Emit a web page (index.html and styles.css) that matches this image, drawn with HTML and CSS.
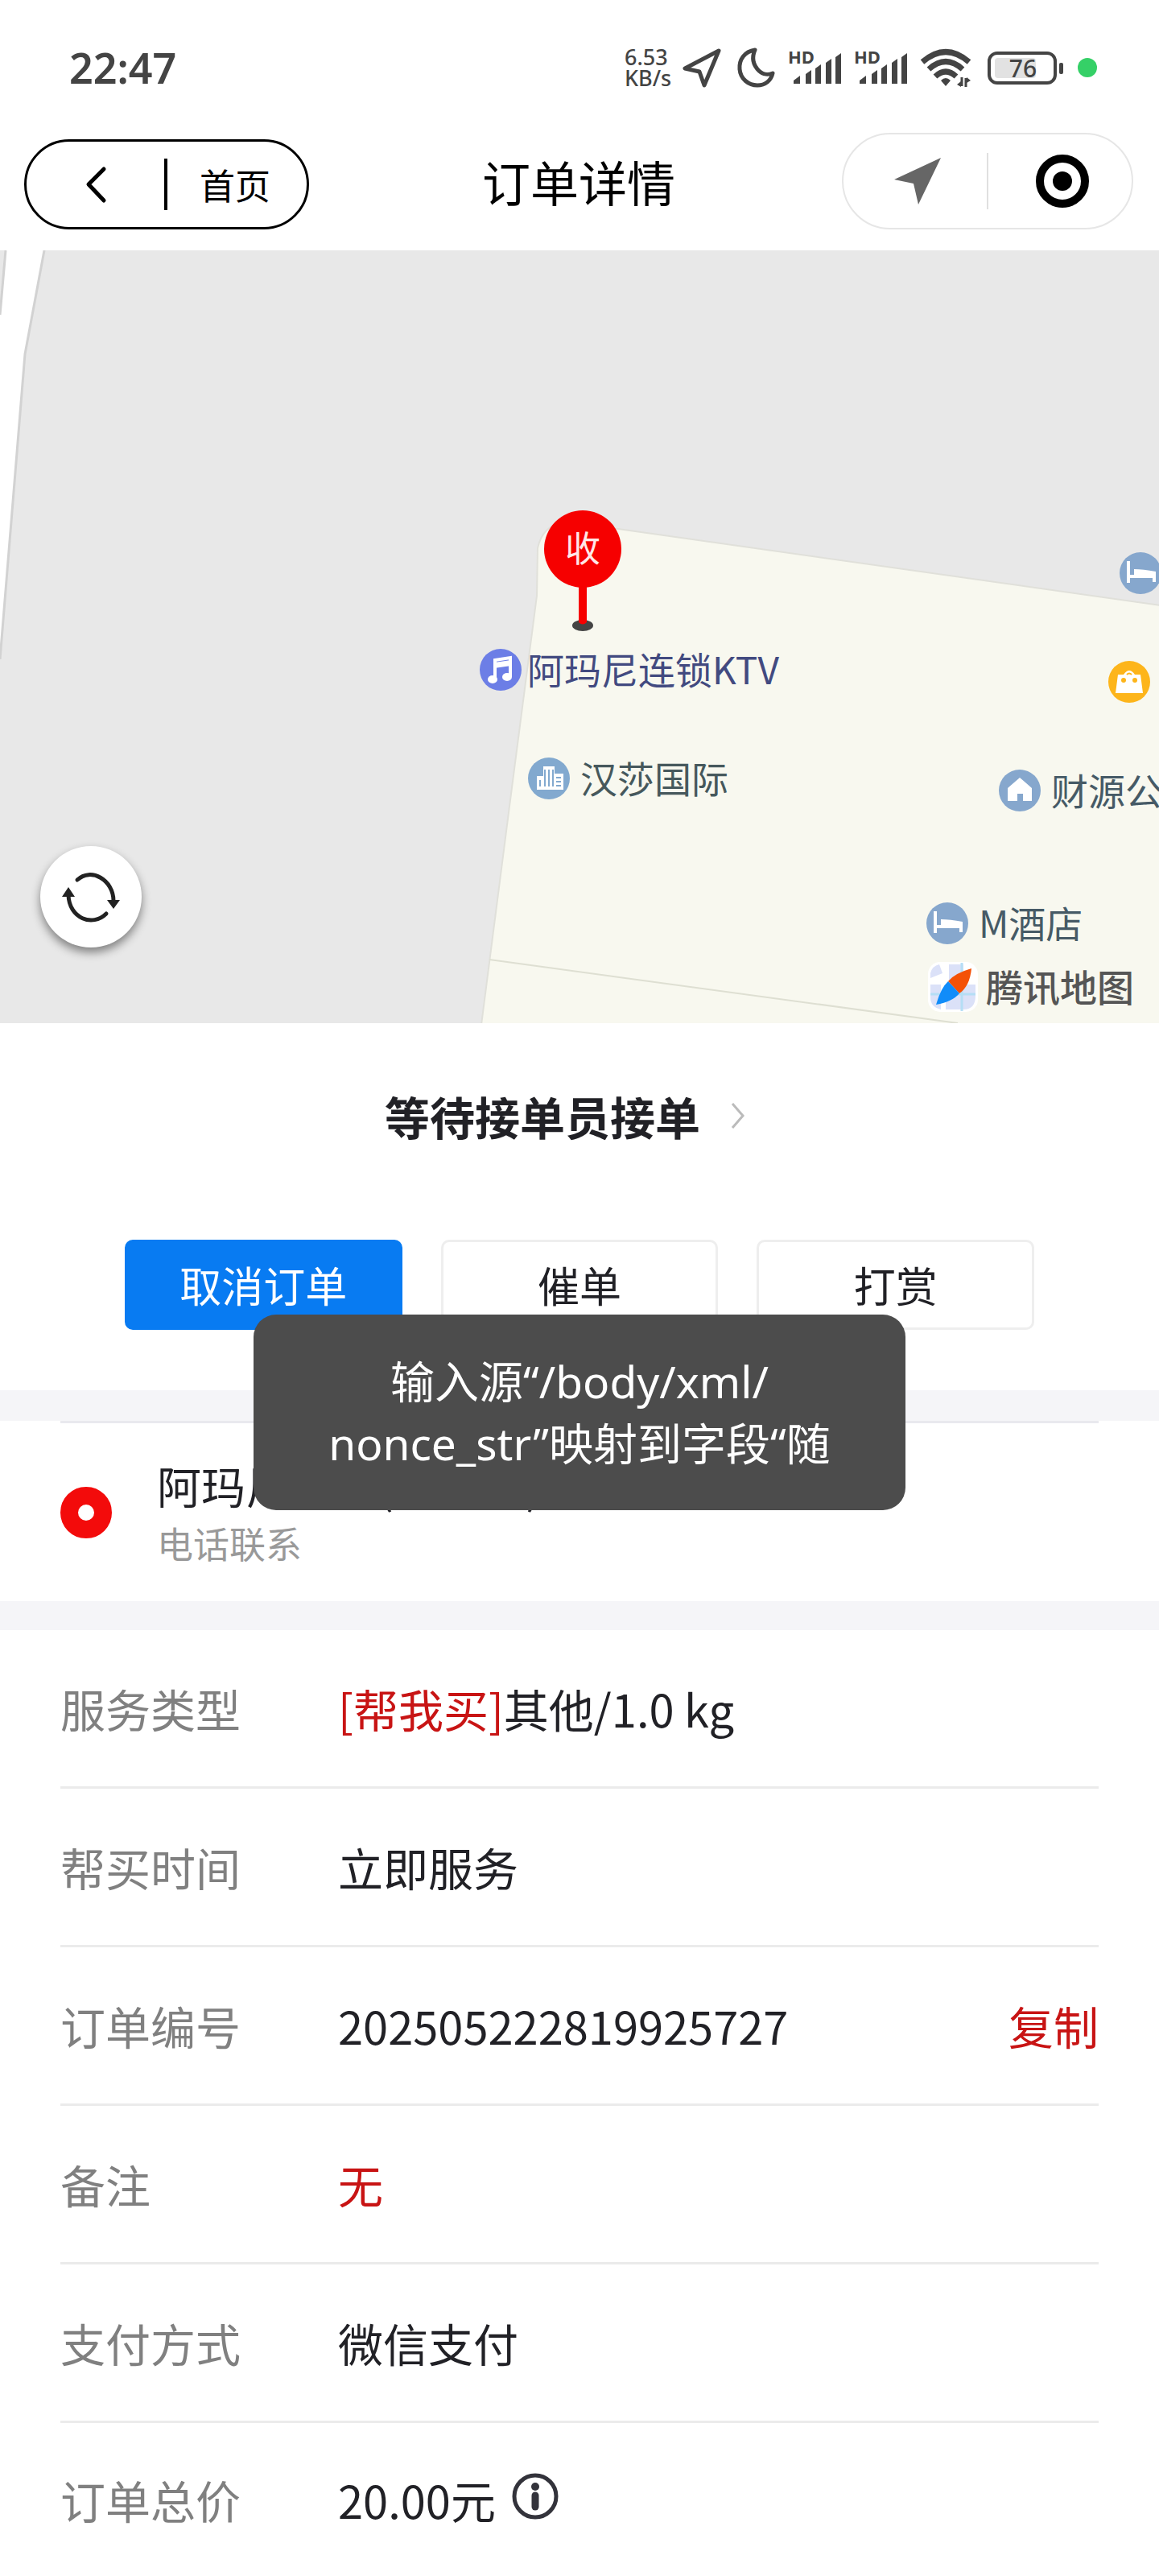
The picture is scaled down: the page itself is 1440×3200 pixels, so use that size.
FILE: index.html
```html
<!DOCTYPE html>
<html lang="zh-CN">
<head>
<meta charset="utf-8">
<meta name="viewport" content="width=device-width, initial-scale=1">
<title>订单详情</title>
<link rel="stylesheet" href="styles.css">
</head>
<body>
<div class="page">
  <div class="status-bar">
    <time class="clock">22:47</time>
    <div class="indicators">
      <div class="speed"><span>6.53</span><span>KB/s</span></div>
      <svg width="50" height="52" viewBox="0 0 50 52" fill="none" stroke="#444" stroke-width="5" stroke-linejoin="round"><path d="M45 5 3 27 21 31 27 48Z"/></svg>
      <svg width="49" height="52" viewBox="0 0 49 52" fill="none" stroke="#444" stroke-width="5" stroke-linejoin="round"><path d="M24 4C11 6 4 16 5 28c1 12 11 20 22 20 10 0 17-6 19-15-5 2-12 2-17-3-8-8-9-17-5-26Z"/></svg>
      <svg width="66" height="52" viewBox="0 0 66 52" fill="#444"><text x="0" y="21" class="hd">HD</text><path d="M7 46v-4l8-6v10zM22 46V34l7-5v17zM34 46V27l7-5v24zM47 46V20l7-5v31zM59 46V13l7-5v38z"/></svg>
      <svg width="66" height="52" viewBox="0 0 66 52" fill="#444"><text x="0" y="21" class="hd">HD</text><path d="M7 46v-4l8-6v10zM22 46V34l7-5v17zM34 46V27l7-5v24zM47 46V20l7-5v31zM59 46V13l7-5v38z"/></svg>
      <svg width="66" height="52" viewBox="0 0 66 52" fill="none" stroke="#444" stroke-width="7"><path d="M3 19Q32-6 61 19M11 28Q32 9 53 28M19 37Q32 25 45 37"/><path d="M26 42Q32 36 38 42L32 49Z" fill="#444" stroke="none"/><path d="M52 38v11M57 50V39" stroke-width="3"/><path d="M51 50v-7l-5 4zM58 38v7l5-3z" fill="#444" stroke="none"/></svg>
      <svg width="98" height="52" viewBox="0 0 98 52"><rect x="4" y="8" width="82" height="37" rx="10" fill="#fff" stroke="#444" stroke-width="4"/><rect x="11" y="14" width="51" height="25" rx="4" fill="#e2e2e2"/><rect x="91" y="20" width="5" height="14" rx="2" fill="#444"/><text x="46" y="38" class="level" text-anchor="middle">76</text></svg>
      <svg width="25" height="52" viewBox="0 0 25 52"><circle cx="12" cy="26" r="12" fill="#35d067"/></svg>
    </div>
  </div>

  <header class="nav">
    <div class="back-pill">
      <button class="back" aria-label="返回"><svg width="28" height="48" viewBox="0 0 28 48" fill="none" stroke="#000" stroke-width="5" stroke-linecap="round" stroke-linejoin="round"><path d="M24 5 5 24 24 44"/></svg></button>
      <a class="home" href="#">首页</a>
    </div>
    <h1>订单详情</h1>
    <div class="capsule">
      <button aria-label="位置"><svg width="62" height="62" viewBox="0 0 62 62"><path d="M60 2 32 60 26 34 2 29Z" fill="#666"/></svg></button>
      <button aria-label="关闭"><svg width="68" height="68" viewBox="0 0 68 68"><circle cx="34" cy="34" r="28" fill="none" stroke="#000" stroke-width="10"/><circle cx="34" cy="34" r="12"/></svg></button>
    </div>
  </header>

  <section class="map" aria-label="地图">
    <svg class="terrain" width="1440" height="960" viewBox="0 0 1440 960">
      <path d="M7 0H55L31 129 0 508V80Z" fill="#fff"/>
      <path d="M7 0 0 80M55 0 31 129 0 508" fill="none" stroke="#d2d2d2" stroke-width="3"/>
      <path d="M668 370Q674 342 700 338L768 346 1442 441V962H598L635 675 667 429Z" fill="#f8f8ef" stroke="#e0e0da" stroke-width="2"/>
      <path d="M608 881 1190 960" stroke="#dedfd2" stroke-width="2"/>
    </svg>
    <svg class="pin" width="100" height="154" viewBox="0 0 100 154"><ellipse cx="50" cy="145" rx="13" ry="7" fill="#444"/><path d="M45 90h10v51q-5 5-10 0z" fill="#f60000"/><circle cx="50" cy="50" r="48" fill="#f60000"/><text x="50" y="66" text-anchor="middle" class="pin-text">收</text></svg>
    <div class="poi poi-ktv"><svg width="54" height="54" viewBox="0 0 54 54"><circle cx="27" cy="27" r="26" fill="#6c7ee6"/><path d="M20 38V15l19-3v24" fill="none" stroke="#fff" stroke-width="4"/><path d="M19 18l21-3v7l-21 3z" fill="#fff"/><ellipse cx="17" cy="39" rx="6" ry="5" fill="#fff"/><ellipse cx="35" cy="36" rx="6" ry="5" fill="#fff"/></svg><span>阿玛尼连锁KTV</span></div>
    <div class="poi poi-hansha"><svg width="54" height="54" viewBox="0 0 54 54"><circle cx="27" cy="27" r="26" fill="#82a9cf"/><path d="M12 24h8v-12h14v9h11v20H12z" fill="#fff"/><path d="M16 29v8M22 16v21M27 16v21M32 16v21M36 26h6M36 31h6M36 36h6" stroke="#82a9cf" stroke-width="2"/></svg><span>汉莎国际</span></div>
    <div class="poi poi-hotel-top"><svg width="54" height="54" viewBox="0 0 54 54"><circle cx="27" cy="27" r="26" fill="#86a7cd"/><path d="M10 12h4v17h5v-7q11 0 27 3v13h-4v-5H14v6h-4z" fill="#fff"/></svg></div>
    <div class="poi poi-shop"><svg width="54" height="54" viewBox="0 0 54 54"><circle cx="27" cy="27" r="26" fill="#fdb51b"/><path d="M13 18h7q7-10 14 0h7l3 23H10z" fill="#fff"/><path d="M24 18q3-3 6 0" fill="none" stroke="#fdb51b" stroke-width="2"/><circle cx="20" cy="25" r="3" fill="#fdb51b"/><circle cx="34" cy="25" r="3" fill="#fdb51b"/></svg></div>
    <div class="poi poi-caiyuan"><svg width="54" height="54" viewBox="0 0 54 54"><circle cx="27" cy="27" r="26" fill="#86a7cd"/><path d="M12 24 27 11 42 24v16H31v-9h-7v9H12z" fill="#fff"/></svg><span>财源公</span></div>
    <div class="poi poi-hotel"><svg width="54" height="54" viewBox="0 0 54 54"><circle cx="27" cy="27" r="26" fill="#86a7cd"/><path d="M10 12h4v17h5v-7q11 0 27 3v13h-4v-5H14v6h-4z" fill="#fff"/></svg><span>M酒店</span></div>
    <div class="map-brand"><svg width="62" height="62" viewBox="0 0 62 62"><rect width="62" height="62" rx="15" fill="#fff"/><path d="M3 14Q5 5 14 3L18 14 3 20zM26 3h18v17l-18 3zM3 28h13v31Q3 56 3 44zM22 28h37v14q0 17-15 17H22z" fill="#dbe1f8"/><path d="M42 1v60M3 40h56" stroke="#b5def5" stroke-width="3"/><path d="M54 8Q33 14 25 24L39 39Q52 30 54 8Z" fill="#f45107"/><path d="M25 24Q16 32 10 53 31 49 39 39Z" fill="#118cf9"/></svg><span>腾讯地图</span></div>
    <button class="refresh" aria-label="刷新"><svg width="76" height="70" viewBox="0 0 76 70" fill="none" stroke="#222" stroke-width="5"><path d="M21 14C38-2 66 14 66 40M57 56C40 73 11 62 10 33" stroke-linecap="round"/><path d="M58 39h16l-8 11zM2 35h16l-8-12z" fill="#222" stroke="none"/></svg></button>
  </section>

  <section class="order-state">
    <a class="state-link" href="#"><strong>等待接单员接单</strong><svg width="18" height="34" viewBox="0 0 18 34" fill="none" stroke="#bbb" stroke-width="3"><path d="M2 2 15 17 2 32"/></svg></a>
    <div class="actions">
      <button class="primary">取消订单</button>
      <button>催单</button>
      <button>打赏</button>
    </div>
  </section>

  <section class="receiver">
    <div class="receiver-row">
      <svg width="64" height="64" viewBox="0 0 64 64"><circle cx="32" cy="32" r="21" fill="none" stroke="#f30b0b" stroke-width="22"/></svg>
      <div>
        <p class="place">阿玛尼连锁(汉莎店)</p>
        <a class="call" href="#">电话联系</a>
      </div>
    </div>
  </section>

  <dl class="details">
    <div class="row"><dt>服务类型</dt><dd><span class="red">[帮我买]</span>其他/1.0 kg</dd></div>
    <div class="row"><dt>帮买时间</dt><dd>立即服务</dd></div>
    <div class="row"><dt>订单编号</dt><dd>202505222819925727</dd><dd class="end"><button class="copy">复制</button></dd></div>
    <div class="row"><dt>备注</dt><dd class="red">无</dd></div>
    <div class="row"><dt>支付方式</dt><dd>微信支付</dd></div>
    <div class="row"><dt>订单总价</dt><dd class="price">20.00元<svg width="58" height="58" viewBox="0 0 58 58"><circle cx="29" cy="29" r="26" fill="none" stroke="#33333b" stroke-width="5"/><circle cx="29" cy="17" r="5" fill="#33333b"/><path d="M29 28v14" stroke="#33333b" stroke-width="9" stroke-linecap="round"/></svg></dd></div>
  </dl>

  <div class="toast" role="alert">输入源“/body/xml/<br>nonce_str”映射到字段“随</div>
</div>
</body>
</html>
```
FILE: styles.css
```css
* { box-sizing: border-box; }

body {
  margin: 0;
  background: #fff;
  color: #212126;
  font-family: "Noto Sans CJK SC", sans-serif;
}

h1, p, dl, dd { margin: 0; }

button {
  margin: 0;
  padding: 0;
  border: 0;
  background: none;
  color: inherit;
  font: inherit;
}

a { color: inherit; text-decoration: none; }

svg { display: block; flex: none; overflow: visible; }

.page { position: relative; }

/* Phone status bar */
.status-bar {
  display: flex;
  align-items: flex-start;
  justify-content: space-between;
  height: 144px;
  padding: 54px 76px 0 86px;
  color: #444;
  font-family: "Noto Sans", sans-serif;
}

.clock { font-size: 52px; font-weight: 600; line-height: 60px; }

.indicators { display: flex; align-items: center; gap: 16px; height: 60px; }

.speed {
  display: flex;
  flex-direction: column;
  width: 56px;
  font-size: 27px;
  font-weight: 500;
  line-height: 26px;
  white-space: nowrap;
}

.hd { font-size: 22px; font-weight: 700; }
.level { font-size: 30px; font-weight: 500; fill: #444; }

/* Title bar */
.nav {
  display: grid;
  grid-template-columns: 1fr auto 1fr;
  align-items: end;
  height: 167px;
  padding: 0 32px 26px 30px;
  color: #000;
}

.back-pill {
  display: flex;
  align-items: center;
  width: 354px;
  height: 112px;
  border: 3px solid #000;
  border-radius: 56px;
}

.back {
  display: flex;
  align-items: center;
  justify-content: center;
  width: 175px;
  height: 64px;
  border-right: 4px solid #000;
}

.home { flex: 1; padding-left: 40px; font-size: 44px; line-height: 64px; }

.nav h1 { font-size: 60px; font-weight: 400; line-height: 120px; }

.capsule {
  display: flex;
  align-items: center;
  justify-self: end;
  width: 362px;
  height: 120px;
  border: 2px solid #e6e6e6;
  border-radius: 60px;
}

.capsule button {
  display: flex;
  flex: 1;
  align-items: center;
  justify-content: center;
  height: 70px;
  padding-left: 6px;
}

.capsule button:first-child { border-right: 2px solid #e0e0e0; }

/* Map canvas */
.map {
  position: relative;
  height: 960px;
  overflow: hidden;
  background: #e8e8e8;
}

.terrain { position: absolute; left: 0; top: 0; }
.pin { position: absolute; left: 674px; top: 321px; }
.pin-text { font-size: 44px; fill: #ffe8e8; }

.poi {
  position: absolute;
  display: flex;
  align-items: center;
  gap: 12px;
  color: #465a66;
  font-size: 46px;
  line-height: 50px;
  white-space: nowrap;
}

.poi span, .map-brand span { padding-bottom: 4px; }

.poi-ktv { left: 595px; top: 494px; gap: 6px; color: #424a80; }
.poi-hansha { left: 655px; top: 629px; color: #46585c; }
.poi-hotel-top { left: 1390px; top: 374px; }
.poi-shop { left: 1376px; top: 509px; }
.poi-caiyuan { left: 1240px; top: 644px; }
.poi-hotel { left: 1150px; top: 809px; }

.map-brand {
  position: absolute;
  right: 31px;
  bottom: 14px;
  display: flex;
  align-items: center;
  gap: 10px;
  color: #555;
  font-size: 46px;
  font-weight: 500;
  line-height: 58px;
}

.refresh {
  position: absolute;
  left: 50px;
  bottom: 94px;
  display: flex;
  align-items: center;
  justify-content: center;
  width: 126px;
  height: 126px;
  border-radius: 50%;
  background: #fff;
  box-shadow: 0 6px 12px rgba(0, 0, 0, 0.45);
}

/* Order state and actions */
.order-state { padding: 75px 155px 75px; }

.state-link {
  display: flex;
  align-items: center;
  justify-content: center;
  gap: 38px;
  padding-right: 36px;
  font-size: 56px;
  line-height: 80px;
}

.actions {
  display: grid;
  grid-template-columns: repeat(3, 1fr);
  gap: 48px;
  margin-top: 114px;
}

.actions button {
  height: 112px;
  border: 3px solid #eee;
  border-radius: 10px;
  font-size: 52px;
  line-height: 80px;
}

.actions .primary { border-color: #087bf2; background: #087bf2; color: #fff; }

/* Receiver */
.receiver {
  padding: 0 75px;
  border-top: 38px solid #f5f5f8;
  border-bottom: 36px solid #f5f5f8;
}

.receiver-row {
  display: flex;
  align-items: center;
  gap: 56px;
  height: 224px;
  border-top: 3px solid #e9e9ee;
}

.place { font-size: 55px; line-height: 76px; }
.call { display: block; color: #999; font-size: 45px; line-height: 70px; }

/* Detail rows */
.details { padding: 0 75px; font-size: 56px; line-height: 80px; }

.row {
  display: flex;
  align-items: center;
  height: 197px;
  border-bottom: 3px solid #ebebeb;
}

.row:last-child { height: 190px; border-bottom: 0; }

dt { width: 345px; color: #808080; }
.end { margin-left: auto; }
.red, .copy { color: #c81414; }
.price { display: flex; align-items: center; gap: 20px; }
.price svg { margin-bottom: 8px; }

/* Message over the page */
.toast {
  position: absolute;
  top: 1633px;
  left: 0;
  right: 0;
  width: 810px;
  margin: 0 auto;
  padding: 44px 40px 45px;
  border-radius: 28px;
  background: #4c4c4c;
  color: #fff;
  font-family: "Noto Sans", "Noto Sans CJK SC", sans-serif;
  font-size: 55px;
  line-height: 77px;
  text-align: center;
}
```
